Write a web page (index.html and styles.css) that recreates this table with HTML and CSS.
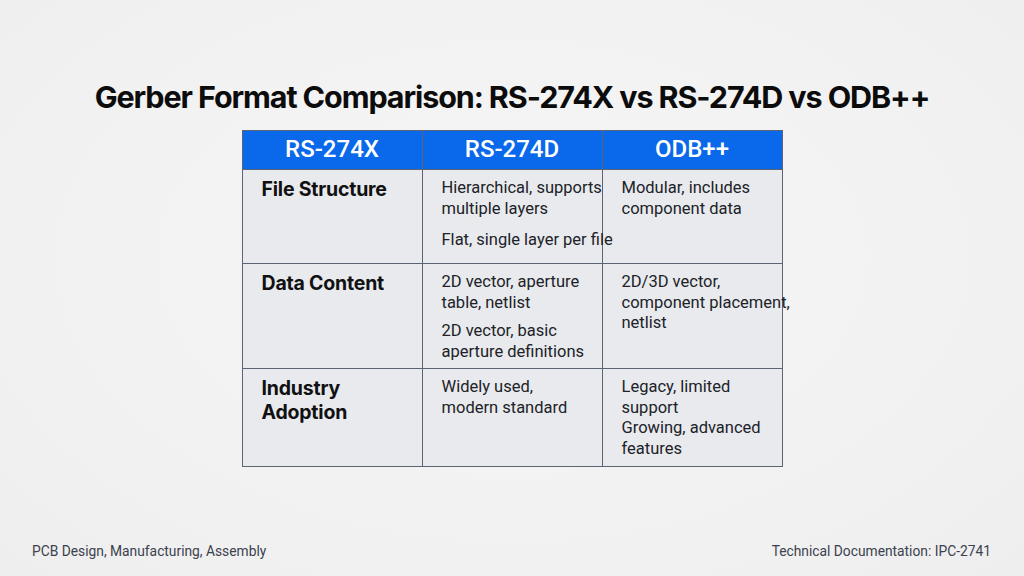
FILE: index.html
```html
<!DOCTYPE html>
<html>
<head>
<meta charset="utf-8">
<link rel="stylesheet" href="styles.css">
</head>
<body>
<div class="slide">
  <h1 class="title">Gerber Format Comparison: RS-274X vs RS-274D vs ODB++</h1>
  <div class="table-wrap">
    <table class="cmp">
      <thead>
        <tr><th>RS-274X</th><th>RS-274D</th><th>ODB++</th></tr>
      </thead>
      <tbody>
        <tr class="r1">
          <td class="label">File Structure</td>
          <td><p>Hierarchical, supports<br>multiple layers</p><p class="gap12">Flat, single layer per file</p></td>
          <td><p>Modular, includes<br>component data</p></td>
        </tr>
        <tr class="r2">
          <td class="label">Data Content</td>
          <td><p>2D vector, aperture<br>table, netlist</p><p class="gap9">2D vector, basic<br>aperture definitions</p></td>
          <td><p>2D/3D vector,<br>component placement,<br>netlist</p></td>
        </tr>
        <tr class="r3">
          <td class="label">Industry<br>Adoption</td>
          <td><p>Widely used,<br>modern standard</p></td>
          <td><p>Legacy, limited<br>support<br>Growing, advanced<br>features</p></td>
        </tr>
      </tbody>
    </table>
  </div>
  <footer class="foot">
    <span>PCB Design, Manufacturing, Assembly</span>
    <span>Technical Documentation: IPC-2741</span>
  </footer>
</div>
</body>
</html>
```
FILE: styles.css
```css
* { box-sizing: border-box; }
html, body { margin: 0; padding: 0; }
body {
  width: 1024px;
  height: 576px;
  overflow: hidden;
  font-family: Roboto, "Noto Sans", sans-serif;
  background: radial-gradient(ellipse at 50% 45%, #f6f6f6 0%, #f1f1f1 70%, #eeeeee 100%);
  color: #1d1f23;
}
.slide {
  height: 576px;
  display: flex;
  flex-direction: column;
}
.title {
  margin: 0;
  padding-top: 77px;
  height: 130px;
  text-align: center;
  font-family: Inter, Roboto, sans-serif;
  font-size: 30.5px;
  font-weight: 700;
  letter-spacing: -1.1px;
  line-height: 40px;
  color: #0c0c0c;
}
.table-wrap {
  display: flex;
  justify-content: center;
}
.cmp {
  border-collapse: collapse;
  table-layout: fixed;
  width: 541px;
}
.cmp th, .cmp td {
  border: 1.5px solid #5c6373;
  width: 180px;
  vertical-align: top;
  text-align: left;
}
.cmp th {
  background: #0a68ea;
  color: #fff;
  font-size: 24px;
  font-weight: 500;
  height: 39px;
  text-align: center;
  padding: 0;
  line-height: 36px;
}
.cmp td {
  background: #e8eaee;
  padding: 8px 10px 0 19px;
  font-size: 16.5px;
  line-height: 20.5px;
  color: #202227;
  white-space: nowrap;
  overflow: visible;
}
.cmp td.label {
  font-family: Inter, Roboto, sans-serif;
  font-size: 19.5px;
  font-weight: 700;
  letter-spacing: -0.2px;
  line-height: 24px;
  color: #111;
  padding-top: 7px;
}
.cmp td p { margin: 0; }
.cmp td p.gap12 { margin-top: 11px; }
.cmp td p.gap9 { margin-top: 8px; }
.r1 td { height: 94px; }
.r2 td { height: 105px; }
.r3 td { height: 98px; }
.foot {
  margin-top: auto;
  display: flex;
  justify-content: space-between;
  padding: 0 33px 16px 32px;
  font-size: 13.8px;
  color: #3b414e;
  line-height: 18px;
}
```
